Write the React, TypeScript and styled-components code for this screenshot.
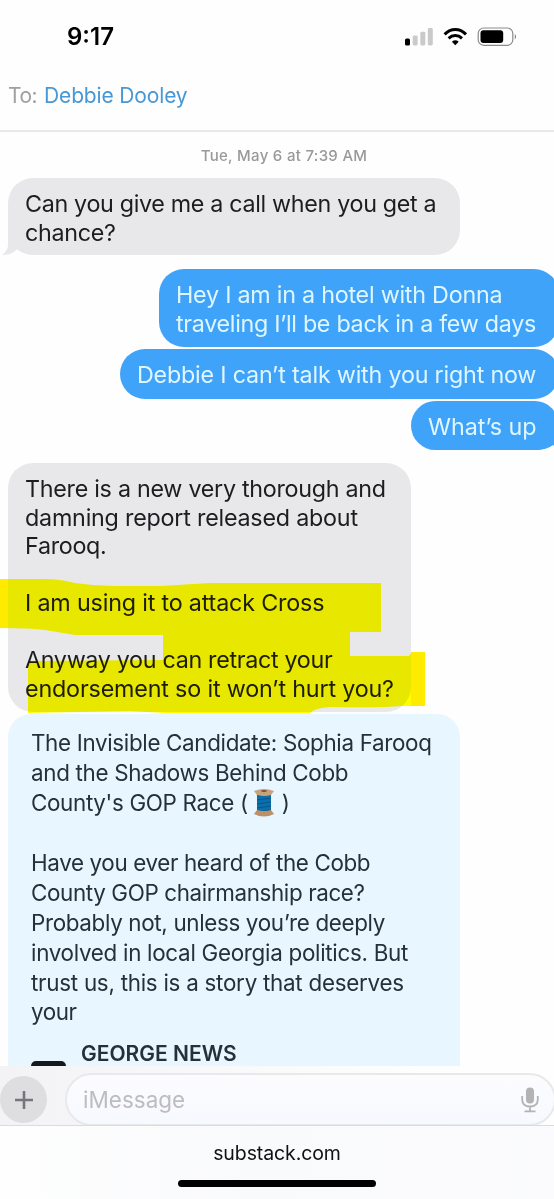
import React from "react";
import styled, { createGlobalStyle } from "styled-components";

const GlobalStyle = createGlobalStyle`
  * { box-sizing: border-box; }
  body { margin: 0; background: #fefefe; overflow: hidden; }
`;

const Screen = styled.div`
  width: 554px;
  height: 1199px;
  display: flex;
  flex-direction: column;
  overflow: hidden;
  background: #fefefe;
  font-family: Inter, "Liberation Sans", sans-serif;
`;

const StatusBar = styled.header`
  height: 74px;
  flex: none;
  display: flex;
  justify-content: space-between;
  padding: 25px 37px 0 67px;
`;

const Clock = styled.div`
  font-size: 24px;
  line-height: 24px;
  font-weight: 600;
  letter-spacing: 0;
  color: #000;
`;

const StatusIcons = styled.div`
  display: flex;
  align-items: flex-start;
  padding-top: 2px;
`;

const Recipient = styled.div`
  height: 58px;
  flex: none;
  display: flex;
  gap: 7px;
  padding: 8px 8px 0;
  border-bottom: 2px solid #e9e9eb;
  font-size: 21px;
  line-height: 28px;
`;

const ToLabel = styled.span`
  color: #a0a0a3;
  letter-spacing: -0.5px;
`;

const ContactName = styled.span`
  color: #4798d4;
  letter-spacing: -0.15px;
`;

const Thread = styled.main`
  flex: none;
  height: 934px;
  overflow: hidden;
  display: flex;
  flex-direction: column;
  align-items: flex-start;
`;

const DateStamp = styled.div`
  align-self: center;
  margin: 14px 0 13px 14px;
  font-size: 15px;
  line-height: 19px;
  font-weight: 500;
  letter-spacing: 0.3px;
  color: #99999c;
  white-space: nowrap;
`;

const Bubble = styled.div<{ $top?: number; $w: number; $h: number }>`
  position: relative;
  flex: none;
  width: ${(p) => p.$w}px;
  height: ${(p) => p.$h}px;
  margin: ${(p) => p.$top ?? 0}px 0 0 8px;
  padding: 12px 0 0 17px;
  border-radius: 25px;
  background: #e8e8ea;
  color: #1d1d20;
`;

const SentBubble = styled(Bubble)`
  align-self: flex-end;
  margin-right: -5px;
  background: #3fa3fa;
  color: #dff6ff;
`;

const Tail = styled.svg<{ $right?: boolean }>`
  position: absolute;
  bottom: 0;
  ${(p) => (p.$right ? "right: 0;" : "left: -6px;")}
`;

const Line = styled.div<{ $ls?: number }>`
  height: 28.55px;
  font-size: 23.3px;
  line-height: 28.55px;
  letter-spacing: ${(p) => p.$ls ?? 0}px;
  white-space: nowrap;
`;

const Highlighter = styled.svg`
  position: absolute;
  left: -8px;
  top: 0;
  mix-blend-mode: multiply;
`;

const LinkCard = styled.article`
  flex: none;
  width: 452px;
  height: 400px;
  margin: 2px 0 0 8px;
  padding: 14px 0 0 23px;
  border-radius: 23px;
  background: #e8f7ff;
  color: #25313a;
`;

const CardLine = styled.div<{ $ls?: number }>`
  height: 29.95px;
  font-size: 22.4px;
  line-height: 29.95px;
  letter-spacing: ${(p) => p.$ls ?? 0}px;
  white-space: nowrap;
  display: flex;
  align-items: center;
`;

const Spool = styled.svg`
  margin: 0 7px 0 5px;
`;

const Source = styled.div`
  display: flex;
  gap: 15px;
  padding-top: 14px;
`;

const SourceLogo = styled.div`
  width: 35px;
  height: 30px;
  margin-top: 20px;
  border-radius: 5px;
  background: #14191d;
`;

const SourceName = styled.div`
  font-size: 21px;
  line-height: 26px;
  font-weight: 600;
`;

const Composer = styled.div`
  height: 60px;
  flex: none;
  display: flex;
  align-items: center;
  gap: 18px;
  padding-top: 8px;
  border-bottom: 1px solid #d9dbe1;
  background: linear-gradient(90deg, #f3f3f5 0, #f8f8fa 180px, #fefefe 420px);
  overflow: hidden;
`;

const AddButton = styled.button`
  width: 47px;
  height: 47px;
  flex: none;
  border: 0;
  padding: 0;
  border-radius: 50%;
  background: #dedee0;
  display: grid;
  place-items: center;
`;

const Field = styled.div`
  width: 491px;
  flex: none;
  height: 53px;
  display: flex;
  align-items: center;
  justify-content: space-between;
  padding: 0 15px 0 16px;
  border: 2px solid #e9e9ec;
  border-radius: 27px;
  background: linear-gradient(180deg, #fcfcfe, #f6f9fe);
  color: #bcbcc1;
  font-size: 22.5px;
`;

const Footer = styled.footer`
  flex: 1;
  display: flex;
  flex-direction: column;
  align-items: center;
  padding-top: 14px;
  background: linear-gradient(90deg, #fefefe, #f9fafc 45%, #fbfbfe);
`;

const Domain = styled.div`
  font-size: 19.5px;
  line-height: 26px;
  letter-spacing: -0.1px;
  color: #111;
`;

const HomeIndicator = styled.div`
  width: 198px;
  height: 7px;
  margin-top: 14px;
  border-radius: 4px;
  background: #000;
`;

export default function App() {
  return (
    <>
      <GlobalStyle />
      <Screen>
        <StatusBar>
          <Clock>9:17</Clock>
          <StatusIcons>
            <svg width="112" height="20" viewBox="0 0 112 20">
              <rect x="0" y="11.5" width="5" height="7" rx="1.6" fill="#000" />
              <rect x="7.7" y="8.5" width="5" height="10" rx="1.4" fill="#cacaca" />
              <rect x="15.3" y="4.7" width="5" height="13.8" rx="1.4" fill="#cacaca" />
              <rect x="22.8" y="1" width="5" height="17.5" rx="1.4" fill="#cacaca" />
              <g fill="none" stroke="#000" strokeWidth="3">
                <path d="M39.6 7.4C46 .8 54.6 .8 61 7.4" />
                <path d="M43.6 11.4C47.6 7.6 53 7.6 57 11.4" />
              </g>
              <path d="M46.9 14.7q3.4-2.8 6.8 0L50.3 18.3z" fill="#000" />
              <rect x="73.2" y="1" width="34.6" height="17.3" rx="5.5" fill="none" stroke="#8b8b8b" strokeWidth="1.2" />
              <rect x="75.5" y="3.3" width="22.7" height="12.8" rx="3" fill="#000" />
              <path d="M109.8 7q2.4 2.7 0 5.4z" fill="#777" />
            </svg>
          </StatusIcons>
        </StatusBar>
        <Recipient>
          <ToLabel>To:</ToLabel>
          <ContactName>Debbie Dooley</ContactName>
        </Recipient>
        <Thread>
          <DateStamp>Tue, May 6 at 7:39 AM</DateStamp>
          <Bubble $w={452} $h={77}>
            <Tail width="24" height="22" viewBox="0 0 24 22">
              <path d="M6 0V12Q6 18 0 21.5Q8 23 14 17L24 10V0z" fill="#e8e8ea" />
            </Tail>
            <Line $ls={-0.33}>Can you give me a call when you get a</Line>
            <Line $ls={-0.3}>chance?</Line>
          </Bubble>
          <SentBubble $top={14} $w={400} $h={78}>
            <Line $ls={-0.24}>Hey I am in a hotel with Donna</Line>
            <Line $ls={-0.3}>traveling I’ll be back in a few days</Line>
          </SentBubble>
          <SentBubble $top={2} $w={439} $h={50}>
            <Line $ls={-0.2}>Debbie I can’t talk with you right now</Line>
          </SentBubble>
          <SentBubble $top={2} $w={148} $h={49}>
            <Line>What’s up</Line>
            <Tail $right width="24" height="22" viewBox="0 0 24 22">
              <path d="M0 22L24 0V22L18 17Q12 22 0 22z" fill="#3fa3fa" />
            </Tail>
          </SentBubble>
          <Bubble $top={13} $w={403} $h={249}>
            <Line $ls={-0.28}>There is a new very thorough and</Line>
            <Line $ls={-0.22}>damning report released about</Line>
            <Line $ls={-0.3}>Farooq.</Line>
            <Line />
            <Line $ls={-0.18}>I am using it to attack Cross</Line>
            <Line />
            <Line $ls={-0.32}>Anyway you can retract your</Line>
            <Line $ls={-0.17}>endorsement so it won’t hurt you?</Line>
            <Highlighter width="430" height="252" viewBox="0 463 430 252">
              <path
                fill="#fffe00"
                d="M0 579H45Q60 579 75 583Q95 586 115 586H160L210 583H381V632H350V656H409L412 652H425V706H402Q380 708 330 707Q315 708 310 713H165L130 711L28 713V661L163 660V635H75L45 630Q30 628 0 628z"
              />
              <path fill="#ffec00" d="M0 579H8V628H0zM411 652H425V706H411z" />
            </Highlighter>
          </Bubble>
          <LinkCard>
            <CardLine $ls={-0.33}>The Invisible Candidate: Sophia Farooq</CardLine>
            <CardLine $ls={-0.32}>and the Shadows Behind Cobb</CardLine>
            <CardLine $ls={-0.33}>
              County's GOP Race (
              <Spool width="22" height="29" viewBox="0 0 22 29">
                <rect x="4" y="5" width="14" height="19" fill="#0b6fae" />
                <path d="M4 8L18 6M4 12L18 10M4 16L18 14M4 20L18 18M4 24L18 22" stroke="#075787" strokeWidth="1.2" />
                <path d="M1 3Q11-1 21 3L18 7Q11 9 4 7z" fill="#c8a27b" />
                <path d="M4 22Q11 24 18 22L21 26Q11 31 1 26z" fill="#bd9067" />
                <ellipse cx="11" cy="3" rx="3" ry="1" fill="#76543a" />
              </Spool>
              )
            </CardLine>
            <CardLine />
            <CardLine $ls={-0.36}>Have you ever heard of the Cobb</CardLine>
            <CardLine $ls={-0.37}>County GOP chairmanship race?</CardLine>
            <CardLine $ls={-0.34}>Probably not, unless you’re deeply</CardLine>
            <CardLine $ls={-0.29}>involved in local Georgia politics. But</CardLine>
            <CardLine $ls={-0.26}>trust us, this is a story that deserves</CardLine>
            <CardLine $ls={-0.4}>your</CardLine>
            <Source>
              <SourceLogo />
              <SourceName>GEORGE NEWS</SourceName>
            </Source>
          </LinkCard>
        </Thread>
        <Composer>
          <AddButton aria-label="Add">
            <svg width="20" height="20" viewBox="0 0 20 20">
              <path d="M10 1V19M1 10H19" stroke="#77777b" strokeWidth="2.6" />
            </svg>
          </AddButton>
          <Field>
            iMessage
            <svg width="18" height="26" viewBox="0 0 18 26">
              <rect x="5" y="0.5" width="8" height="16" rx="4" fill="#b3b3b6" />
              <path d="M1.2 9V12.5Q1.2 19.5 9 19.5T16.8 12.5V9M9 19.5V24M3.5 24.3H14.5" fill="none" stroke="#b3b3b6" strokeWidth="1.8" />
            </svg>
          </Field>
        </Composer>
        <Footer>
          <Domain>substack.com</Domain>
          <HomeIndicator />
        </Footer>
      </Screen>
    </>
  );
}
